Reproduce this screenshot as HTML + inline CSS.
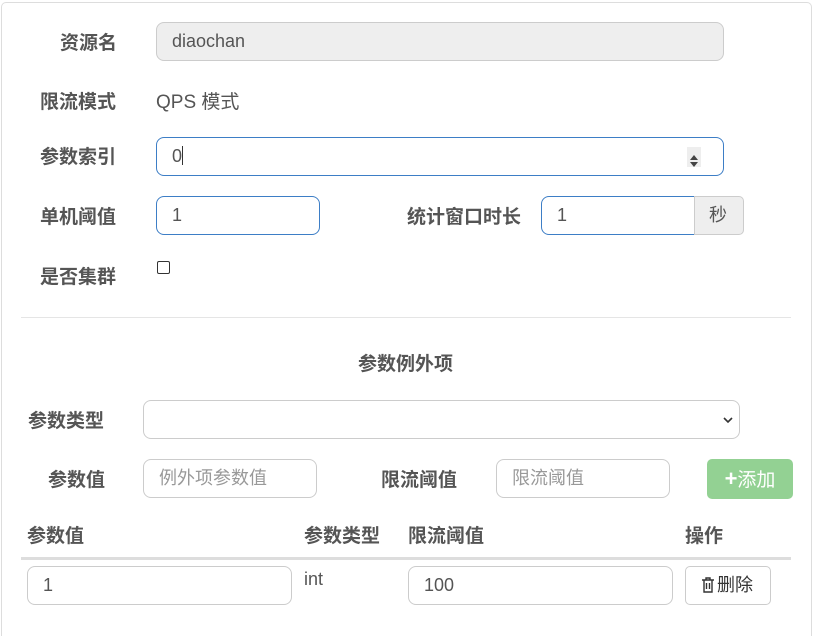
<!DOCTYPE html>
<html style="width:825px;height:636px;overflow:hidden"><head><meta charset="utf-8"><style>
*{box-sizing:border-box;margin:0;padding:0}
body{width:825px;height:636px;background:#fff;position:relative;overflow:hidden;font-family:"Liberation Sans","Noto Sans CJK SC",sans-serif;color:#555}
.card{position:absolute;left:1px;top:2px;width:811px;height:634px;border:1px solid #ddd;border-bottom:none;border-radius:5px 5px 0 0;background:#fff}
.a{position:absolute}
.lb{position:absolute;font-weight:bold;font-size:19px;color:#555;line-height:24px;white-space:nowrap}
.in{position:absolute;height:39px;border:1px solid #ccc;border-radius:8px;background:#fff;font-size:18px;color:#555;line-height:37px;padding-left:15px;white-space:nowrap}
.blue{border-color:#3d7ec6}
.ph{color:#999}
</style></head><body>
<div class="card"></div>
<div class="lb" style="left:60px;top:32px">资源名</div>
<div class="in" style="left:156px;top:22px;width:568px;background:#eee">diaochan</div>
<div class="lb" style="left:40px;top:91px">限流模式</div>
<div class="a" style="left:156px;top:91px;font-size:19px;line-height:24px">QPS 模式</div>
<div class="lb" style="left:40px;top:146px">参数索引</div>
<div class="in blue" style="left:156px;top:137px;width:568px">0<span style="display:inline-block;width:1px;height:19px;background:#333;vertical-align:-3px"></span>
<div class="a" style="left:530px;top:9px;width:14px;height:20px;background:#eee"><svg width="14" height="20"><path d="M3 9L7 4L11 9Z M3 11L7 16L11 11Z" fill="#444"/></svg></div></div>
<div class="lb" style="left:40px;top:206px">单机阈值</div>
<div class="in blue" style="left:156px;top:196px;width:164px">1</div>
<div class="lb" style="left:407px;top:206px">统计窗口时长</div>
<div class="in blue" style="left:541px;top:196px;width:154px;border-radius:8px 0 0 8px">1</div>
<div class="in" style="left:694px;top:196px;width:50px;background:#eee;border-radius:0 5px 5px 0;padding-left:14px">秒</div>
<div class="lb" style="left:40px;top:266px">是否集群</div>
<div class="a" style="left:157px;top:261px;width:13px;height:13px;border:1px solid #333;border-radius:2px"></div>
<div class="a" style="left:21px;top:317px;width:770px;height:1px;background:#e5e5e5"></div>
<div class="lb" style="left:358px;top:353px">参数例外项</div>
<div class="lb" style="left:28px;top:410px">参数类型</div>
<div class="in" style="left:143px;top:400px;width:597px"><svg class="a" style="left:578px;top:14px" width="12" height="10"><path d="M2 3L6 7L10 3" stroke="#333" stroke-width="1.6" fill="none"/></svg></div>
<div class="lb" style="left:48px;top:469px">参数值</div>
<div class="in ph" style="left:143px;top:459px;width:174px">例外项参数值</div>
<div class="lb" style="left:381px;top:469px">限流阈值</div>
<div class="in ph" style="left:496px;top:459px;width:174px">限流阈值</div>
<div class="a" style="left:707px;top:459px;width:86px;height:40px;background:#93d193;border-radius:5px;color:#fff;font-size:19px;line-height:40px;text-align:center"><b style="font-size:22px">+</b>添加</div>
<div class="lb" style="left:27px;top:525px">参数值</div>
<div class="lb" style="left:304px;top:525px">参数类型</div>
<div class="lb" style="left:408px;top:525px">限流阈值</div>
<div class="lb" style="left:685px;top:525px">操作</div>
<div class="a" style="left:21px;top:557px;width:770px;height:3px;background:#ddd"></div>
<div class="in" style="left:27px;top:566px;width:265px">1</div>
<div class="a" style="left:304px;top:569px;font-size:18px">int</div>
<div class="in" style="left:408px;top:566px;width:265px">100</div>
<div class="in" style="left:685px;top:566px;width:86px;border-radius:5px;padding-left:14px;color:#333"><svg width="16" height="16" style="vertical-align:-2px;margin-right:1px"><path d="M2 3H14M6 3V1H10V3M4 3V15H12V3M6.5 6V12M9.5 6V12" stroke="#333" stroke-width="1.4" fill="none"/></svg>删除</div>
</body></html>
